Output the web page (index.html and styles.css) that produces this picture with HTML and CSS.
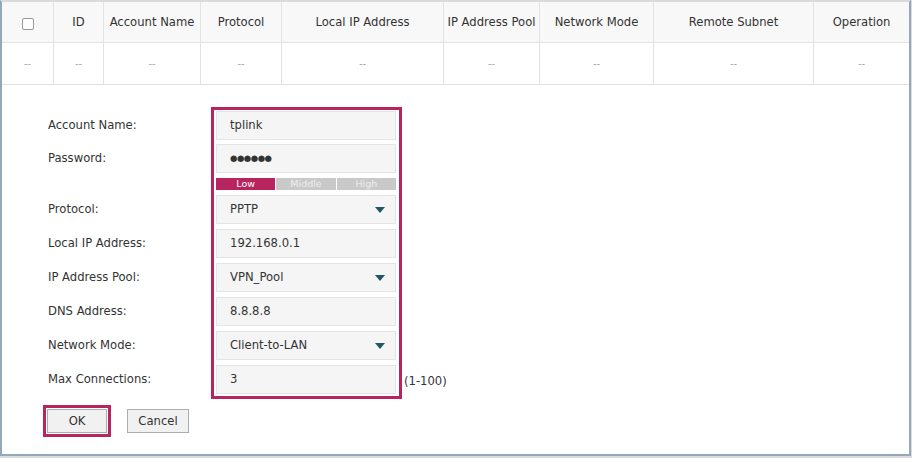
FILE: index.html
```html
<!DOCTYPE html>
<html lang="en">
<head>
    <meta charset="UTF-8">
    <meta name="viewport" content="width=device-width, initial-scale=1.0">
    <title>L2TP/PPTP VPN</title>
    <link rel="stylesheet" href="styles.css">
</head>
<body>
    <div class="frame">
        <!-- 列表 -->
        <div class="vpn_table">
            <div class="vpn_row vpn_head">
                <div class="cell"><span class="check"></span></div>
                <div class="cell">ID</div>
                <div class="cell">Account Name</div>
                <div class="cell">Protocol</div>
                <div class="cell">Local IP Address</div>
                <div class="cell">IP Address Pool</div>
                <div class="cell">Network Mode</div>
                <div class="cell">Remote Subnet</div>
                <div class="cell">Operation</div>
            </div>
            <div class="vpn_row vpn_empty">
                <div class="cell">--</div>
                <div class="cell">--</div>
                <div class="cell">--</div>
                <div class="cell">--</div>
                <div class="cell">--</div>
                <div class="cell">--</div>
                <div class="cell">--</div>
                <div class="cell">--</div>
                <div class="cell">--</div>
            </div>
        </div>
        <!-- 表单 -->
        <div class="vpn_form">
            <div class="form_main">
                <div class="labels">
                    <div class="label">Account Name:</div>
                    <div class="label">Password:</div>
                    <div class="label_gap"></div>
                    <div class="label">Protocol:</div>
                    <div class="label">Local IP Address:</div>
                    <div class="label">IP Address Pool:</div>
                    <div class="label">DNS Address:</div>
                    <div class="label">Network Mode:</div>
                    <div class="label">Max Connections:</div>
                </div>
                <div class="fields">
                    <div class="field">tplink</div>
                    <div class="field pwd">&#9679;&#9679;&#9679;&#9679;&#9679;&#9679;</div>
                    <div class="strength">
                        <span class="on">Low</span>
                        <span>Middle</span>
                        <span>High</span>
                    </div>
                    <div class="field select">PPTP<i class="arrow"></i></div>
                    <div class="field">192.168.0.1</div>
                    <div class="field select">VPN_Pool<i class="arrow"></i></div>
                    <div class="field">8.8.8.8</div>
                    <div class="field select">Client-to-LAN<i class="arrow"></i></div>
                    <div class="field">3</div>
                </div>
                <div class="hint">(1-100)</div>
            </div>
            <div class="buttons">
                <div class="btn_mark"><div class="btn">OK</div></div>
                <div class="btn">Cancel</div>
            </div>
        </div>
    </div>
</body>
</html>
```

FILE: styles.css
```css
body{
    margin: 0;
    background-color: #dcdcdc;
    font-family: "DejaVu Sans", Verdana, sans-serif;
    font-size: 11.6px;
    color: #333;
}
.frame{
    width: 911px;
    height: 456px;
    box-sizing: border-box;
    background-color: #fff;
    border: 2px solid #95a7bb;
    border-top-color: #dadada;
}
.vpn_row{
    display: grid;
    grid-template-columns: 52px 50px 97px 81px 162px 96px 114px 160px 1fr;
    border-bottom: 1px solid #e2e2e2;
}
.vpn_head{
    height: 40px;
    background-color: #f8f8f8;
}
.vpn_empty{
    height: 41px;
    color: #aaa;
    font-size: 10px;
}
.vpn_row>.cell{
    display: flex;
    align-items: center;
    justify-content: center;
    border-right: 1px solid #e2e2e2;
    white-space: nowrap;
}
.vpn_row>.cell:last-child{
    border-right: none;
}
.check{
    width: 10px;
    height: 10px;
    border: 1px solid #999;
    border-radius: 2px;
    background-color: #fff;
    margin-top: 3px;
}
.vpn_form{
    padding: 22px 0 0 46px;
}
.form_main{
    display: flex;
}
.labels{
    width: 163px;
    padding-top: 4px;
}
.label,.field{
    height: 29px;
    line-height: 29px;
    margin-bottom: 5px;
}
.labels>.label:first-child{
    margin-bottom: 4px;
}
.label_gap{
    height: 17px;
}
.fields{
    width: 180px;
    padding: 1px 3px 0 2px;
    border: 3px solid #b8245e;
}
.field{
    position: relative;
    box-sizing: border-box;
    padding-left: 13px;
    background-color: #f5f5f5;
    border: 1px solid #e4e4e4;
    line-height: 27px;
    color: #333;
}
.fields>.field:first-child{
    margin-bottom: 4px;
}
.fields>.field:last-child{
    margin-bottom: 0;
}
.pwd{
    font-size: 8.5px;
    letter-spacing: -0.5px;
}
.arrow{
    position: absolute;
    right: 10px;
    top: 11px;
    width: 0;
    height: 0;
    border-left: 5px solid transparent;
    border-right: 5px solid transparent;
    border-top: 6px solid #1e5863;
}
.strength{
    display: flex;
    gap: 1px;
    height: 12px;
    margin: 0 0 5px;
}
.strength>span{
    flex: 1;
    background-color: #c9c9c9;
    color: #ededed;
    font-size: 9.5px;
    line-height: 12px;
    text-align: center;
}
.strength>span.on{
    background-color: #b8245e;
    color: #fff;
}
.hint{
    align-self: flex-end;
    height: 29px;
    line-height: 29px;
    margin: 0 0 3px 2px;
}
.buttons{
    display: flex;
    align-items: center;
    margin: 6px 0 0 -5px;
}
.btn_mark{
    padding: 1px;
    border: 3px solid #b8245e;
    margin-right: 16px;
}
.btn{
    width: 60px;
    height: 24px;
    box-sizing: border-box;
    border: 1px solid #adadad;
    background-color: #f1f1f1;
    text-align: center;
    line-height: 22px;
}
.buttons>.btn{
    width: 62px;
}
```
